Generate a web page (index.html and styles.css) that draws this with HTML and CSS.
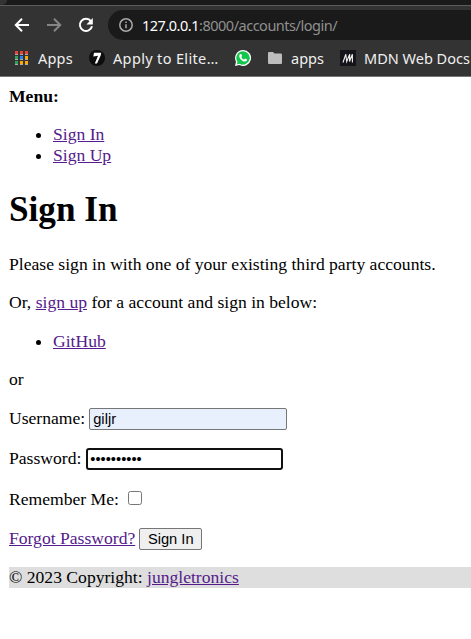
FILE: index.html
```html
<!DOCTYPE html>
<html lang="en">
<head>
<meta charset="utf-8">
<title>Sign In</title>
<link rel="stylesheet" href="styles.css">
</head>
<body>
<header class="browser">
  <div class="tabs"><span class="tab-foot"></span></div>
  <div class="toolbar">
    <svg class="nav" viewBox="0 0 16 16"><path d="M15 8H2.5M8 1.8 1.8 8 8 14.2"/></svg>
    <svg class="nav dim" viewBox="0 0 16 16"><path d="M1 8h12.500M8 1.800 14.200 8 8 14.200"/></svg>
    <svg class="nav" viewBox="0 0 16 16"><path d="M13 4.300A6.100 6.100 0 1 0 14 9.300"/><path class="fill" d="M14.800 1v6.400H8.400z"/></svg>
    <div class="address">
      <svg class="info" viewBox="0 0 14 14"><circle cx="7" cy="7" r="6.200"/><path d="M7 6.200v4M7 3.500v1.500"/></svg>
      <span class="url"><b>127.0.0.1</b>:8000/accounts/login/</span>
    </div>
  </div>
  <nav class="bookmarks">
    <svg class="grid-icon" viewBox="0 0 13 14"><path fill="#ea4335" d="M0 0h3v3H0zM5 0h3v3H5zM10 0h3v3h-3z"/><path fill="#34a05a" d="M0 5h3v3H0zM0 10h3v3H0z"/><path fill="#2684fc" d="M5 5h3v3H5z"/><path fill="#f9ab00" d="M10 5h3v3h-3zM5 10h3v3H5zM10 10h3v3h-3z"/><path fill="#aaa" d="M0 3h3v1H0zM5 3h3v1H5zM10 3h3v1h-3zM0 8h3v1H0zM5 8h3v1H5zM10 8h3v1h-3zM0 13h3v1H0zM5 13h3v1H5zM10 13h3v1h-3z"/></svg>
    <span class="label apps">Apps</span>
    <svg class="mark seven" viewBox="0 0 16 16"><circle cx="8" cy="8" r="8" fill="#0d0d0d"/><path fill="#fff" d="M5 2.800h7.200l-.4 2.400L8 13.500H5.800L9 5.800 4.300 6.400z"/></svg>
    <span class="label elite">Apply to Elite…</span>
    <svg class="mark whatsapp" viewBox="0 0 16 16"><path fill="#fff" d="M8 0a8 8 0 1 1-3.600 15.100L0 16l1-4.200A8 8 0 0 1 8 0z"/><path fill="#12c64b" d="M8 1.300a6.700 6.700 0 1 1-3.500 12.400l-2.700.7.700-2.600A6.700 6.700 0 0 1 8 1.300z"/><path fill="#fff" d="m5.100 4.100 1.100-.2.900 2-.8 1c.7 1.400 1.500 2.100 2.900 2.700l.9-1 2 1c0 1.300-1 2.100-2.200 2C7.200 11.400 4.400 8.700 4.200 6c0-.8.300-1.500.9-1.900z"/></svg>
    <svg class="folder" viewBox="0 0 14 12"><path fill="#bdbdbd" d="M1.300 0H5l1.500 1.600h6.200c.8 0 1.300.5 1.300 1.300v7.800c0 .8-.5 1.300-1.300 1.300H1.300C.5 12 0 11.500 0 10.700V1.300C0 .5.500 0 1.300 0z"/></svg>
    <span class="label folder-name">apps</span>
    <svg class="mark mdn" viewBox="0 0 16 16"><path fill="#15141a" d="M0 0h16v16H0z"/><path fill="none" stroke="#eee" stroke-width="1.100" d="M3 12.500 5.800 4.200l.9 7.300L9.700 4.200l-.2 7.300 2.900-7.300v8.300"/></svg>
    <span class="label docs">MDN Web Docs</span>
  </nav>
</header>
<main class="page">
  <strong class="menu">Menu:</strong>
  <ul>
    <li><a href="#">Sign In</a></li>
    <li><a href="#">Sign Up</a></li>
  </ul>
  <h1>Sign In</h1>
  <p>Please sign in with one of your existing third party accounts.</p>
  <p>Or, <a href="#">sign up</a> for a account and sign in below:</p>
  <ul class="providers">
    <li><a href="#">GitHub</a></li>
  </ul>
  <p>or</p>
  <form class="login">
    <div class="field"><label for="user">Username:</label><input class="text user" id="user" type="text" value="giljr"></div>
    <div class="field"><label for="pass">Password:</label><input class="text pass" id="pass" type="password" value="jungle2023"></div>
    <div class="field remember"><label for="rem">Remember Me:</label><input class="check" id="rem" type="checkbox"></div>
    <div class="field actions"><a href="#">Forgot Password?</a><button type="button">Sign In</button></div>
  </form>
  <footer>© 2023 Copyright: <a href="#">jungletronics</a></footer>
</main>
</body>
</html>
```
FILE: styles.css
```css
* { box-sizing: border-box; }
html { overflow: hidden; background: #fff; }
body { margin: 0; overflow: hidden; }
svg { display: block; flex: none; }

.browser { height: 77px; background: #333; border-bottom: 1px solid #777; font-family: "Noto Sans", sans-serif; }
.tabs { height: 6px; background: #1a1a1a; border-bottom: 1px solid #5c5c5c; }
.tab-foot { display: block; width: 7px; height: 5px; background: #333; border-bottom-right-radius: 5px; }
.toolbar { display: flex; align-items: center; height: 38px; padding-left: 14px; }
.nav { width: 16px; height: 16px; margin-right: 16px; fill: none; stroke: #fff; stroke-width: 2; }
.nav.dim { stroke: #858585; }
.nav .fill { fill: #fff; stroke: none; }
.nav:nth-child(3) { margin-right: 14px; }
.address { display: flex; align-items: center; flex: 1; height: 30px; padding-left: 11px; background: #1a1a1a; border-radius: 15px 0 0 15px; }
.info { width: 14px; height: 14px; fill: none; stroke: #aaa; stroke-width: 1.5; }
.url { margin: -1px 0 0 9px; font-size: 14.5px; letter-spacing: -0.49px; color: #909090; white-space: nowrap; }
.url b { font-weight: 400; color: #fff; }

.bookmarks { display: flex; align-items: center; height: 28px; padding-left: 15px; }
.label { flex: none; margin-top: -1px; color: #f0f0f0; font-size: 14.5px; white-space: nowrap; }
.grid-icon { width: 13px; height: 14px; margin-right: 10px; }
.apps { width: 51px; letter-spacing: 0.2px; }
.mark { width: 16px; height: 16px; }
.elite { width: 122px; margin-left: 8px; letter-spacing: 0.35px; }
.folder { width: 14px; height: 12px; margin: 0 9px 0 17px; }
.folder-name { width: 49px; }
.docs { margin-left: 8px; }

.page { padding: 9px 0 0 9px; font: 17.6px/21px "Liberation Serif", serif; color: #000; }
.page a { color: #551a8b; text-decoration: underline; }
.menu { display: block; height: 21px; }
.page ul { margin: 17px 0 23px; padding-left: 44px; }
.page .providers { margin: 18px 0 17px; }
h1 { margin: 0 0 24px; font-size: 35.2px; line-height: 41px; }
.page p { margin: 0 0 17px; }
.login { display: block; margin-top: 18px; }
.field { display: flex; align-items: center; height: 22px; margin-bottom: 18px; white-space: nowrap; }
.field label, .field a { margin-bottom: 2px; }
.field.remember label { margin-bottom: 0; }
.text { width: 198px; height: 22px; margin: 0 0 0 4px; padding: 1px 3px; border: 1px solid #767676; border-radius: 2px; outline: 0; font: 14.67px "Liberation Sans", sans-serif; color: #000; }
.user { background: #e8f0fe; }
.pass { width: 197px; margin-left: 5px; border: 2px solid #101010; border-radius: 3px; padding: 0 2px; background: #fff; }
.check { width: 14px; height: 14px; margin: 0 0 3px 9px; }
.actions { margin-bottom: 17px; }
button { width: 63px; height: 22px; margin-left: 4px; padding: 0; border: 1px solid #767676; border-radius: 2px; background: #efefef; color: #000; font: 14.67px "Liberation Sans", sans-serif; }
footer { height: 21px; background: #dedede; }
```
